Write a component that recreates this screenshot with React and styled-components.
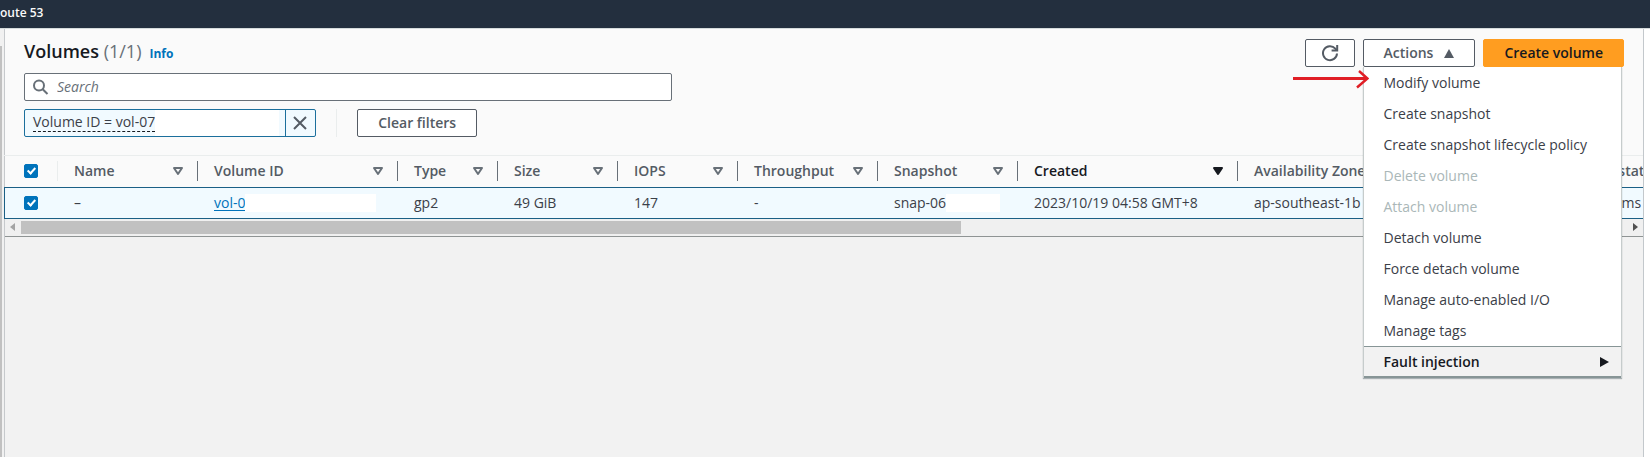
import React from "react";
import styled, { createGlobalStyle } from "styled-components";

const GlobalStyle = createGlobalStyle`
  *, *::before, *::after { box-sizing: border-box; }
  body {
    margin: 0;
    background: #f2f2f2;
    color: #3b4048;
    font-family: "Open Sans", "Noto Sans", sans-serif;
    font-size: 14px;
    line-height: 22px;
    overflow: hidden;
  }
  button, input { font: inherit; color: inherit; }
`;

const Page = styled.div`
  display: flex;
  flex-direction: column;
  min-height: 100vh;
`;

const TopNav = styled.nav`
  height: 28px;
  flex: none;
  background: #232f3e;
  overflow: hidden;
  display: flex;
`;

const NavLink = styled.a`
  color: #fafafa;
  font-size: 12px;
  font-weight: 600;
  line-height: 26px;
  text-decoration: none;
  white-space: nowrap;
`;

const Body = styled.div`
  display: flex;
  flex: 1;
  border-top: 1px solid #d5dbdb;
`;

const LeftRail = styled.div`
  flex: none;
  width: 5px;
  padding-top: 17px;
  display: flex;
  background: #f1f1f1;
  border-right: 1px solid #c6c9cc;
`;

const RailThumb = styled.div`
  width: 2px;
  background: #c1c1c1;
`;

const RightRail = styled.div`
  flex: none;
  width: 7px;
  background: #ffffff;
  border-left: 1px solid #c3c8cc;
`;

const Main = styled.main`
  flex: 1;
  min-width: 0;
`;

const Panel = styled.section`
  background: #fafafa;
  border-bottom: 1px solid #8f9494;
`;

const PanelHeader = styled.header`
  display: flex;
  justify-content: space-between;
  padding: 10px 19px 0;
`;

const Heading = styled.div`
  display: flex;
  align-items: baseline;
  gap: 8px;
  height: 34px;
`;

const Title = styled.h1`
  margin: 0;
  font-size: 18px;
  font-weight: 600;
  line-height: 24px;
  color: #16191f;
`;

const Count = styled.span`
  font-weight: 400;
  color: #687078;
`;

const InfoLink = styled.a`
  color: #0073bb;
  font-size: 12px;
  font-weight: 700;
  text-decoration: none;
`;

const Actions = styled.div`
  display: flex;
  align-items: flex-start;
  gap: 8px;
`;

const Button = styled.button`
  display: flex;
  align-items: center;
  justify-content: center;
  gap: 11px;
  height: 28px;
  padding: 0 ${(p) => (p.$icon ? 15 : 20)}px;
  border: 1px solid ${(p) => (p.$primary ? "#ff9d20" : "#545b64")};
  border-radius: 2px;
  background: ${(p) => (p.$primary ? "#ff9d20" : "#ffffff")};
  color: ${(p) => (p.$primary ? "#16191f" : "#545b64")};
  font-weight: 600;
  white-space: nowrap;
`;

const Dropdown = styled.div`
  position: relative;
`;

const Menu = styled.ul`
  position: absolute;
  z-index: 2;
  top: 100%;
  left: 0;
  width: 259px;
  margin: 0;
  padding: 0;
  list-style: none;
  background: #ffffff;
  border: 1px solid #c6cccc;
  border-width: 0 1px;
  box-shadow: 0 1px 1px rgba(0, 28, 36, 0.3);
`;

const MenuItem = styled.button`
  display: flex;
  align-items: center;
  justify-content: space-between;
  width: 100%;
  height: 31px;
  padding: 0 12px 0 20px;
  border: 0;
  background: transparent;
  text-align: left;
  white-space: nowrap;
  &:disabled { color: #aab7b8; }
`;

const SubmenuItem = styled(MenuItem)`
  height: 32px;
  border: 1px solid #879596;
  border-width: 1px 0 2px;
  background: #f2f2f2;
  color: #16191f;
  font-weight: 600;
`;

const Pointer = styled.svg`
  position: absolute;
  z-index: 3;
  top: 31px;
  right: 106px;
`;

const Filters = styled.div`
  display: flex;
  flex-direction: column;
  gap: 8px;
  padding: 0 19px 18px;
`;

const SearchBox = styled.label`
  display: flex;
  align-items: center;
  gap: 8px;
  width: 100%;
  max-width: 648px;
  height: 28px;
  padding: 0 8px;
  border: 1px solid #687078;
  border-radius: 2px;
  background: #ffffff;
`;

const SearchInput = styled.input`
  flex: 1;
  min-width: 0;
  padding: 0;
  border: 0;
  outline: 0;
  background: transparent;
  &::placeholder {
    color: #687078;
    font-style: italic;
    opacity: 1;
  }
`;

const TokenRow = styled.div`
  display: flex;
  align-items: stretch;
  gap: 20px;
  height: 28px;
`;

const Token = styled.div`
  display: flex;
  border: 1px solid #1b6f9c;
  border-radius: 2px;
  background: #f1faff;
`;

const TokenText = styled.button`
  padding: 3px 0 0;
  margin: 0 0 4px 8px;
  border: 0;
  border-bottom: 1px dashed #16191f;
  background: transparent;
  line-height: 18px;
  white-space: nowrap;
`;

const TokenMask = styled.span`
  width: 124px;
  margin-right: 6px;
  background: #ffffff;
`;

const TokenRemove = styled.button`
  display: flex;
  align-items: center;
  justify-content: center;
  width: 30px;
  padding: 0 1px 0 0;
  border: 0;
  border-left: 1px solid #1b6f9c;
  background: transparent;
`;

const Divider = styled.span`
  width: 1px;
  background: #eaeded;
`;

/* The selected row's outline overlaps the panel's left border. */
const TableClip = styled.div`
  margin-left: -1px;
  overflow: hidden;
`;

const Table = styled.table`
  width: 1674px;
  table-layout: fixed;
  border-collapse: separate;
  border-spacing: 0;
  border-top: 1px solid #eaeded;
`;

const Col = styled.col`
  width: ${(p) => p.$width}px;
`;

const HeadCell = styled.th`
  height: 31px;
  padding: 5px 0 6px;
  color: ${(p) => (p.$sorted ? "#16191f" : "#545b64")};
  font-weight: 600;
  text-align: left;
  vertical-align: top;
  white-space: nowrap;
`;

const HeadContent = styled.div`
  display: flex;
  align-items: center;
  justify-content: space-between;
  height: 20px;
  padding: 0 13px 0 16px;
  border-right: 1px solid ${(p) => (p.$faint ? "#eaeded" : "#687078")};
`;

const Cell = styled.td`
  height: 32px;
  padding: 0 0 0 16px;
  border: 1px solid #1b5f85;
  border-width: 1px 0;
  background: #f1faff;
  text-align: left;
  white-space: nowrap;
`;

const SelectCell = styled(Cell)`
  padding: 0 0 0 19px;
  border-left-width: 1px;
`;

const SelectHead = styled(HeadContent)`
  padding: 0 0 0 20px;
`;

const CellContent = styled.div`
  display: flex;
  align-items: center;
`;

const CellMask = styled.span`
  width: ${(p) => p.$width}px;
  height: 18px;
  background: #ffffff;
`;

const VolumeLink = styled.a`
  color: #0073bb;
  text-underline-offset: 2px;
`;

const Checkbox = styled.input.attrs({ type: "checkbox" })`
  appearance: none;
  display: block;
  width: 14px;
  height: 14px;
  margin: 0;
  border: 1px solid #0073bb;
  border-radius: 2px;
  background: #0073bb;
  position: relative;
  &:checked::after {
    content: "";
    position: absolute;
    top: 1px;
    left: 4px;
    width: 5px;
    height: 8px;
    border: solid #ffffff;
    border-width: 0 2px 2px 0;
    transform: rotate(42deg);
  }
`;

const Scrollbar = styled.div`
  display: flex;
  align-items: center;
  height: 17px;
  padding: 1px 5px 2px;
  gap: 6px;
  background: #f0f0f0;
`;

const Track = styled.div`
  flex: 1;
  height: 13px;
`;

const Thumb = styled.div`
  width: 58.5%;
  height: 100%;
  background: #c1c1c1;
`;

function SearchIcon() {
  return (
    <svg width="16" height="16" viewBox="0 0 16 16" fill="none" stroke="#687078" strokeWidth="2">
      <circle cx="6" cy="6.5" r="5" />
      <path d="M9.7 10.2 14.5 15" />
    </svg>
  );
}

function RefreshIcon() {
  return (
    <svg width="18" height="18" viewBox="0 0 18 18" fill="none" stroke="#545b64" strokeWidth="2">
      <path d="M16 9.5A7 7 0 1 1 14.3 4.6L16 6.3" />
      <path d="M16.2 1v5.6H10.6" />
    </svg>
  );
}

function CloseIcon() {
  return (
    <svg width="14" height="14" viewBox="0 0 14 14" stroke="#545b64" strokeWidth="2">
      <path d="M1 1 13 13M13 1 1 13" />
    </svg>
  );
}

function SortIcon({ filled }) {
  return (
    <svg width="12" height="10" viewBox="0 0 12 10" fill={filled ? "#16191f" : "none"} stroke={filled ? "#16191f" : "#687078"} strokeWidth="2" strokeLinejoin="round">
      <path d="M2 2H10L6 8Z" />
    </svg>
  );
}

const menuItems = [
  { label: "Modify volume" },
  { label: "Create snapshot" },
  { label: "Create snapshot lifecycle policy" },
  { label: "Delete volume", disabled: true },
  { label: "Attach volume", disabled: true },
  { label: "Detach volume" },
  { label: "Force detach volume" },
  { label: "Manage auto-enabled I/O" },
  { label: "Manage tags" },
];

const columns = [
  { label: "Name", width: 140, value: "–" },
  {
    label: "Volume ID",
    width: 200,
    value: <VolumeLink href="#volume">vol-0</VolumeLink>,
    mask: 131,
  },
  { label: "Type", width: 100, value: "gp2" },
  { label: "Size", width: 120, value: "49 GiB" },
  { label: "IOPS", width: 120, value: "147" },
  { label: "Throughput", width: 140, value: "-" },
  { label: "Snapshot", width: 140, value: "snap-06", mask: 54 },
  { label: "Created", width: 220, value: "2023/10/19 04:58 GMT+8", sorted: true },
  { label: "Availability Zone", width: 320, value: "ap-southeast-1b" },
  { label: "Alarm status", width: 120, value: "No alarms" },
];

export default function App() {
  return (
    <Page>
      <GlobalStyle />
      <TopNav>
        <NavLink href="#route53">oute 53</NavLink>
      </TopNav>
      <Body>
        <LeftRail>
          <RailThumb />
        </LeftRail>
        <Main>
          <Panel>
            <PanelHeader>
              <Heading>
                <Title>
                  Volumes <Count>(1/1)</Count>
                </Title>
                <InfoLink href="#info">Info</InfoLink>
              </Heading>
              <Actions>
                <Button $icon aria-label="Refresh">
                  <RefreshIcon />
                </Button>
                <Dropdown>
                  <Button aria-expanded="true">
                    Actions
                    <svg width="10" height="9" viewBox="0 0 10 9" fill="#545b64">
                      <path d="M5 0 10 9H0Z" />
                    </svg>
                  </Button>
                  <Menu>
                    {menuItems.map((item) => (
                      <li key={item.label}>
                        <MenuItem disabled={item.disabled}>{item.label}</MenuItem>
                      </li>
                    ))}
                    <li>
                      <SubmenuItem>
                        Fault injection
                        <svg width="9" height="10" viewBox="0 0 9 10" fill="#16191f">
                          <path d="M0 0 9 5 0 10Z" />
                        </svg>
                      </SubmenuItem>
                    </li>
                  </Menu>
                  <Pointer width="76" height="20" viewBox="0 0 76 20" fill="none" stroke="#e01e25">
                    <path d="M0 8.5H74" strokeWidth="3" />
                    <path d="M66 1 74.5 8.5 64 17.5" strokeWidth="2.5" />
                  </Pointer>
                </Dropdown>
                <Button $primary>Create volume</Button>
              </Actions>
            </PanelHeader>
            <Filters>
              <SearchBox>
                <SearchIcon />
                <SearchInput type="text" placeholder="Search" aria-label="Search" />
              </SearchBox>
              <TokenRow>
                <Token>
                  <TokenText>Volume ID = vol-07</TokenText>
                  <TokenMask />
                  <TokenRemove aria-label="Remove filter">
                    <CloseIcon />
                  </TokenRemove>
                </Token>
                <Divider />
                <Button>Clear filters</Button>
              </TokenRow>
            </Filters>
            <TableClip>
              <Table>
                <colgroup>
                  <Col $width={54} />
                  {columns.map((c) => (
                    <Col key={c.label} $width={c.width} />
                  ))}
                </colgroup>
                <thead>
                  <tr>
                    <HeadCell>
                      <SelectHead $faint>
                        <Checkbox defaultChecked aria-label="Select all volumes" />
                      </SelectHead>
                    </HeadCell>
                    {columns.map((c) => (
                      <HeadCell key={c.label} $sorted={c.sorted}>
                        <HeadContent>
                          {c.label}
                          <SortIcon filled={c.sorted} />
                        </HeadContent>
                      </HeadCell>
                    ))}
                  </tr>
                </thead>
                <tbody>
                  <tr>
                    <SelectCell>
                      <Checkbox defaultChecked aria-label="Select volume vol-0" />
                    </SelectCell>
                    {columns.map((c) => (
                      <Cell key={c.label}>
                        <CellContent>
                          {c.value}
                          {c.mask && <CellMask $width={c.mask} />}
                        </CellContent>
                      </Cell>
                    ))}
                  </tr>
                </tbody>
              </Table>
            </TableClip>
            <Scrollbar>
              <svg width="5" height="8" viewBox="0 0 5 8" fill="#a3a3a3">
                <path d="M5 0V8L0 4Z" />
              </svg>
              <Track>
                <Thumb />
              </Track>
              <svg width="5" height="8" viewBox="0 0 5 8" fill="#505050">
                <path d="M0 0V8L5 4Z" />
              </svg>
            </Scrollbar>
          </Panel>
        </Main>
        <RightRail />
      </Body>
    </Page>
  );
}
